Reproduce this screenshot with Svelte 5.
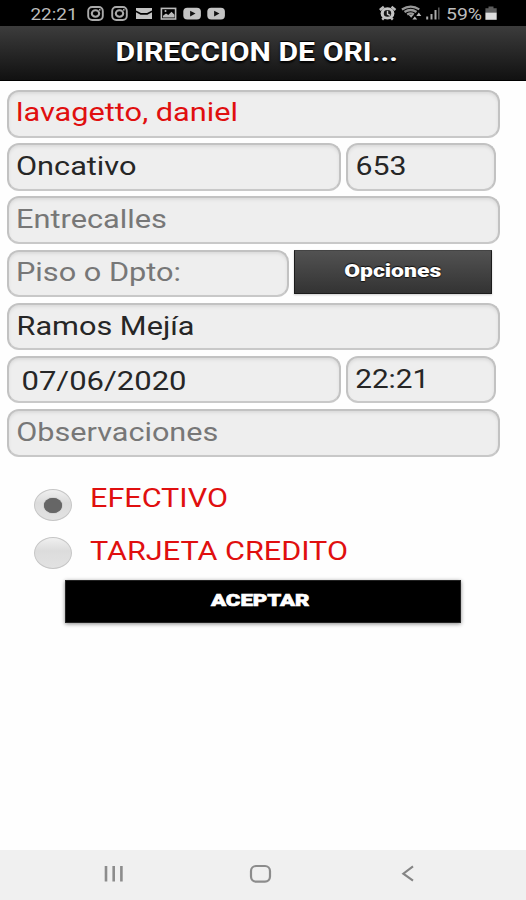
<script>
  const rows = [
    [{ w: 493, text: 'lavagetto, daniel', x: 8, len: 222, y: 31, tone: 'red' }],
    [
      { w: 334, text: 'Oncativo', x: 8, len: 120.5, y: 31.5, tone: 'dark' },
      { w: 150, text: '653', x: 8.5, len: 51, y: 31.5, tone: 'dark' }
    ],
    [{ w: 493, text: 'Entrecalles', x: 8, len: 151, y: 31.6, tone: 'hint' }],
    [
      { w: 282, text: 'Piso o Dpto:', x: 8, len: 165, y: 31, tone: 'hint' },
      { button: 'Opciones' }
    ],
    [{ w: 493, text: 'Ramos Mejía', x: 8.5, len: 178, y: 31.5, tone: 'dark' }],
    [
      { w: 334, text: '07/06/2020', x: 13.5, len: 165, y: 33.6, tone: 'dark' },
      { w: 150, text: '22:21', x: 8.2, len: 74, y: 31.5, tone: 'dark' }
    ],
    [{ w: 493, text: 'Observaciones', x: 8.3, len: 202, y: 31.6, tone: 'hint' }]
  ];
  const payments = [
    { text: 'EFECTIVO', len: 138, checked: true },
    { text: 'TARJETA CREDITO', len: 258, checked: false }
  ];
</script>

{#snippet wide(text, x, y, len, cls)}
  <svg class="wide {cls}" width={x + len + 4} height="44">
    <text {x} {y} textLength={len} lengthAdjust="spacingAndGlyphs">{text}</text>
  </svg>
{/snippet}

<div class="screen">
  <div class="status">
    <div class="group left">
      <svg width="48" height="26" class="wide stat"><text x="0.5" y="19.7" textLength="47" lengthAdjust="spacingAndGlyphs">22:21</text></svg>
      <svg class="icons" width="142" height="26" viewBox="86 0 142 26">
        {#each [95.5, 119.5] as cx}
          <rect x={cx - 7.3} y="7" width="14.6" height="13" rx="4" fill="none" stroke="#aaa" stroke-width="1.9" />
          <ellipse {cx} cy="13.5" rx="3.7" ry="3.2" fill="none" stroke="#aaa" stroke-width="2.1" />
          <circle cx={cx + 4.3} cy="9.8" r=".9" fill="#bbb" />
        {/each}
        <path d="M136 8h16v2.4l-5 2.7h-6l-5-2.7zM136 12.2l4.6 2.5h6.8l4.6-2.5V19h-16z" fill="#c4c4c4" />
        <rect x="161.4" y="8.4" width="14.2" height="10.6" fill="none" stroke="#bbb" stroke-width="1.6" />
        <path d="M163 17.5v-1.8l3-2.2 2.3 1.6 3.2-3.3 3 3v2.7z" fill="#bbb" />
        <circle cx="165.5" cy="11" r="1" fill="#bbb" />
        {#each [183.3, 207.3] as x}
          <rect {x} y="7.7" width="17.6" height="11.8" rx="4" fill="#c4c4c4" />
          <path d="M{x + 6.8} 10.8l5.4 2.8-5.4 2.8z" fill="#111" />
        {/each}
      </svg>
    </div>
    <div class="group right">
      <svg class="icons" width="65" height="26" viewBox="377.5 0 65 26">
        <path d="M380.3 10l4-3.2M396 10l-4-3.2M382.7 19.7l2-2M393.3 19.7l-2-2" stroke="#bbb" stroke-width="2.4" />
        <ellipse cx="388" cy="13.4" rx="6.9" ry="6.2" fill="#c4c4c4" />
        <ellipse cx="388" cy="13.4" rx="3.7" ry="3.3" fill="#161616" />
        <path d="M388 10.8v3.2l2.6 1.4" fill="none" stroke="#ccc" stroke-width="1.4" />
        <path d="M402.4 9.4q9-5.4 17.4 0M405 12q6.2-4 12 0M407.7 14.5q3.7-2.2 6.6 0" fill="none" stroke="#999" stroke-width="2.3" />
        <path d="M409 14.8h5l-2.3 3z" fill="#aaa" />
        <path d="M415.3 16.5l2.4 3h-4.8zM419.3 12.5l2.5 3.6h-5z" fill="#bbb" />
        <path d="M427.7 19.5v-3M432 19.5v-5.5M436 19.5v-9.5" stroke="#aaa" stroke-width="2" />
        <path d="M439.3 19.5V7.5" stroke="#555" stroke-width="1.6" />
      </svg>
      <svg width="37" height="26" class="wide stat"><text x="1" y="19.7" textLength="36" lengthAdjust="spacingAndGlyphs">59%</text></svg>
      <svg class="icons" width="12" height="26" viewBox="485 0 12 26">
        <path d="M488.5 6.5h5v1.7h3.2v4.3h-11.3V8.2h3.1z" fill="#5c5c5c" />
        <path d="M485.4 12.5h11.3v7.3h-11.3z" fill="#ddd" />
      </svg>
    </div>
  </div>

  <header>
    <svg class="wide title" width="290" height="54"><text x="3.5" y="34.6" textLength="282.5" lengthAdjust="spacingAndGlyphs">DIRECCION DE ORI...</text></svg>
  </header>

  <main>
    <div class="form">
      {#each rows as row}
        <div class="row">
          {#each row as f}
            {#if f.button}
              <button class="options">{@render wide(f.button, 49.2, 26, 97, 'opt')}</button>
            {:else}
              <div class="field" style="width: {f.w}px">{@render wide(f.text, f.x, f.y, f.len, f.tone)}</div>
            {/if}
          {/each}
        </div>
      {/each}
    </div>

    <div class="payments">
      {#each payments as p}
        <div class="pay">
          <span class="radio" class:checked={p.checked}></span>
          {@render wide(p.text, 1, 22, p.len, 'red caps')}
        </div>
      {/each}
    </div>

    <button class="accept">{@render wide('ACEPTAR', 145, 24.8, 98.5, 'acc')}</button>
  </main>

  <nav>
    <svg width="20" height="18" viewBox="0 0 20 18"><path d="M2 1v15.5M9.7 1v15.5M17.4 1v15.5" stroke="#8c8c8c" stroke-width="2.6" /></svg>
    <svg class="home" width="24" height="20" viewBox="0 0 24 20"><rect x="2" y="2" width="19" height="15.6" rx="5" fill="none" stroke="#8c8c8c" stroke-width="2.2" /></svg>
    <svg width="14" height="18" viewBox="0 0 14 18"><path d="M12 1.3L2.3 8.7l9.7 7" fill="none" stroke="#858585" stroke-width="2.1" /></svg>
  </nav>
</div>

<style>
  :global(body) {
    background: #fff;
  }
  .screen {
    width: 526px;
    height: 900px;
    display: flex;
    flex-direction: column;
    background: #fefefe;
    font-family: Roboto, "Liberation Sans", sans-serif;
    overflow: hidden;
  }
  svg {
    display: block;
    flex: none;
  }
  .wide {
    overflow: visible;
    font-size: 25.5px;
  }
  .status {
    height: 26px;
    background: #000;
    display: flex;
    justify-content: space-between;
    padding: 0 29px 0 30px;
  }
  .group {
    display: flex;
  }
  .left {
    gap: 8px;
  }
  .right {
    gap: 3px;
  }
  .stat {
    font-size: 16.8px;
    fill: #bdbdbd;
  }
  header {
    box-sizing: border-box;
    height: 55px;
    border-bottom: 1px solid #000;
    padding-left: 112px;
    background: linear-gradient(#3c3c3c, #111);
  }
  .title {
    font-size: 25.5px;
    font-weight: 700;
    fill: #fff;
    text-shadow: 0 -1px 1px #000, 0 2px 2px #000;
  }
  main {
    flex: 1;
    padding-top: 9px;
  }
  .form {
    padding-left: 7px;
    display: flex;
    flex-direction: column;
    gap: 5.7px;
  }
  .row {
    display: flex;
    gap: 5px;
    height: 47.5px;
  }
  .field {
    box-sizing: border-box;
    height: 47.5px;
    border: 2px solid #c2c2c2;
    border-bottom-color: #c8c8c8;
    border-radius: 12px;
    background: #eee;
    box-shadow: inset 0 2px 3px #dcdcdc;
  }
  .field .wide {
    margin: -2px 0 0 -1px;
  }
  .red {
    fill: #e00f0f;
  }
  .dark {
    fill: #262626;
  }
  .hint {
    fill: #777;
  }
  .caps {
    font-size: 25px;
  }
  button {
    display: block;
    padding: 0;
    box-sizing: border-box;
    font-family: inherit;
    text-align: left;
  }
  .options {
    width: 198px;
    height: 44.5px;
    border: 1px solid #1c1c1c;
    border-top-color: #444;
    background: linear-gradient(#525252, #333);
    box-shadow: 0 1px 2px #ccc;
  }
  .opt {
    font-size: 17.5px;
    font-weight: 900;
    fill: #fff;
    text-shadow: 0 -1px 1px #111, 0 1px 1px #111;
  }
  .payments {
    padding: 28.5px 0 0 34px;
  }
  .pay {
    display: flex;
    gap: 17px;
    height: 53px;
  }
  .radio {
    box-sizing: border-box;
    flex: none;
    width: 38px;
    height: 32px;
    margin-top: 4px;
    border: 1.5px solid #c6c6c6;
    border-radius: 50%;
    background: linear-gradient(#f0f0f0, #dcdcdc 42%, #e2e2e2);
    display: flex;
    align-items: center;
    justify-content: center;
  }
  .radio:not(.checked) {
    margin-top: -1px;
  }
  .checked::after {
    content: '';
    width: 18px;
    height: 15px;
    border-radius: 50%;
    background: #666;
    box-shadow: 0 0 1px #555;
  }
  .accept {
    width: 396px;
    height: 43px;
    margin: -10.8px 0 0 65px;
    position: relative;
    border: 1px solid #222;
    background: #000;
    box-shadow: 0 1px 4px #888;
  }
  .acc {
    font-size: 16px;
    font-weight: 900;
    fill: #fff;
    stroke: #fff;
    stroke-width: 0.6px;
  }
  nav {
    height: 50px;
    display: flex;
    align-items: center;
    justify-content: space-between;
    padding: 0 111px 2px 104px;
    box-sizing: border-box;
    background: #f0f0f0;
  }
  .home {
    margin-right: 4px;
  }
</style>
